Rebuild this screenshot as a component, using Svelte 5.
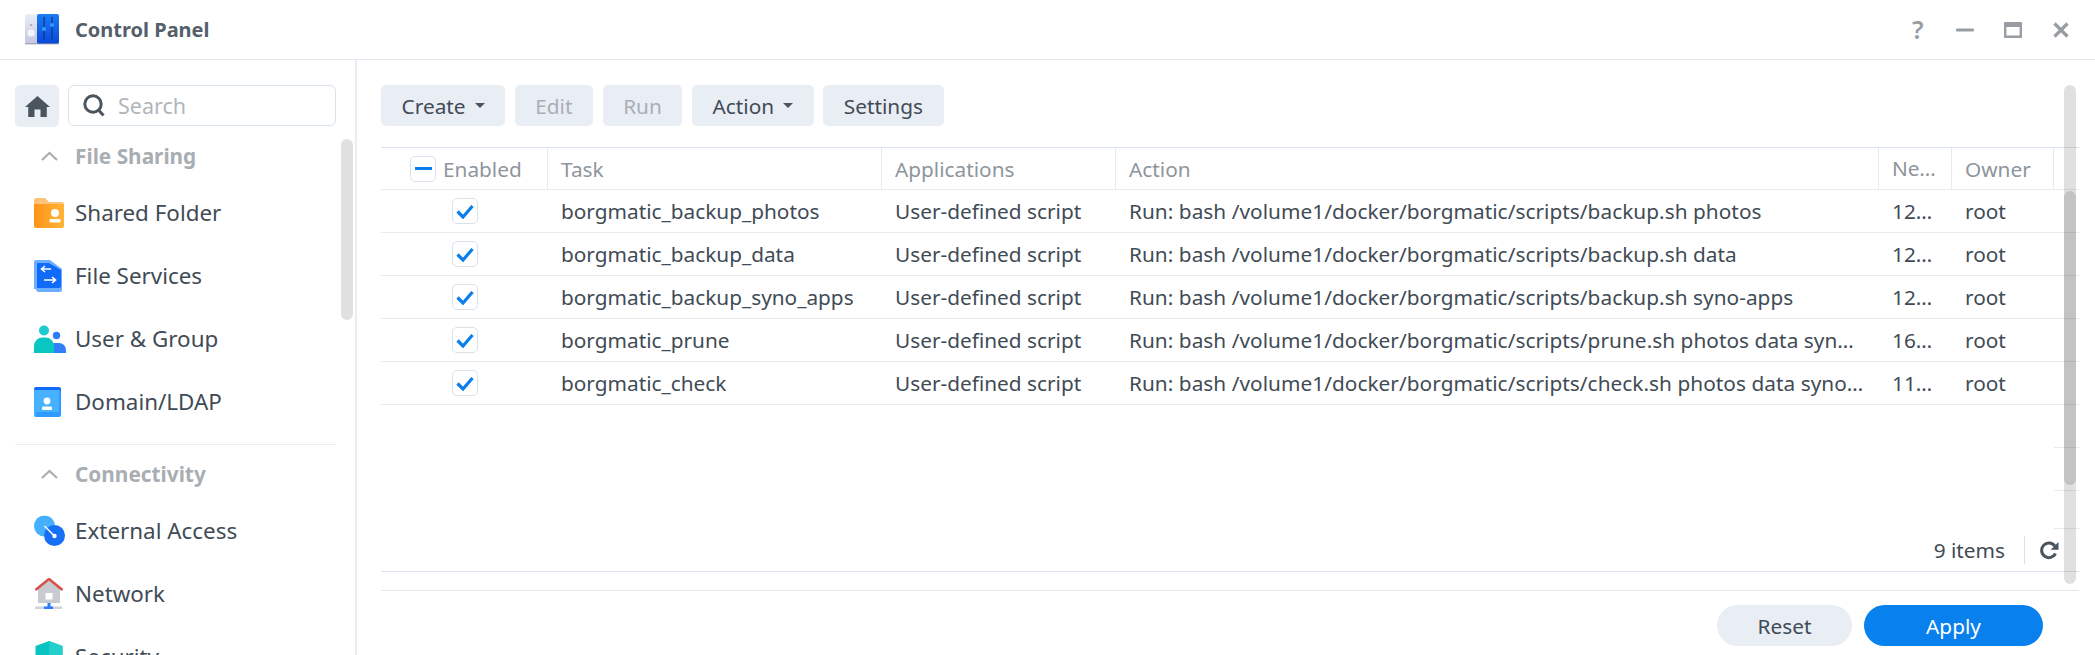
<script lang="ts">
	const tasks = [
		{ name: 'borgmatic_backup_photos', action: 'Run: bash /volume1/docker/borgmatic/scripts/backup.sh photos', next: '12:00' },
		{ name: 'borgmatic_backup_data', action: 'Run: bash /volume1/docker/borgmatic/scripts/backup.sh data', next: '12:30' },
		{ name: 'borgmatic_backup_syno_apps', action: 'Run: bash /volume1/docker/borgmatic/scripts/backup.sh syno-apps', next: '12:45' },
		{ name: 'borgmatic_prune', action: 'Run: bash /volume1/docker/borgmatic/scripts/prune.sh photos data syno-apps', next: '16:00' },
		{ name: 'borgmatic_check', action: 'Run: bash /volume1/docker/borgmatic/scripts/check.sh photos data syno-apps', next: '11:00' }
	];
</script>

<div class="window">
	<header class="titlebar">
		<svg class="app-logo" width="34" height="31" viewBox="0 0 34 31">
			<defs>
				<linearGradient id="cp-left" x1="0" y1="0" x2="0" y2="1">
					<stop offset="0" stop-color="#ecedf8" />
					<stop offset="1" stop-color="#c3c5e2" />
				</linearGradient>
				<linearGradient id="cp-right" x1="0" y1="0" x2="0" y2="1">
					<stop offset="0" stop-color="#1b7df0" />
					<stop offset="1" stop-color="#0a48d8" />
				</linearGradient>
			</defs>
			<rect x="0" y="0" width="15" height="30" rx="2" fill="url(#cp-left)" />
			<rect x="12" y="0" width="22" height="30" rx="2" fill="url(#cp-right)" />
			<rect x="0" y="29" width="34" height="1.5" fill="#8c90a8" opacity=".6" />
			<circle cx="6" cy="19" r="3.600" fill="#f4f4fb" />
			<circle cx="6" cy="11" r=".8" fill="#777" />
			<rect x="18.400" y="3" width="1.400" height="23" fill="#0c3aa6" />
			<rect x="26.200" y="3" width="1.400" height="23" fill="#0c3aa6" />
			<circle cx="19" cy="15" r="2.100" fill="#2f9bff" />
			<circle cx="27" cy="11" r="2.100" fill="#2f9bff" />
		</svg>
		<span class="app-title">Control Panel</span>
		<div class="win-btns">
			<span class="help">?</span>
			<svg width="18" height="18" viewBox="0 0 18 18"><rect x="0" y="7.500" width="18" height="3" rx="1.200" fill="#989da3" /></svg>
			<svg width="18" height="18" viewBox="0 0 18 18"><path fill-rule="evenodd" d="M1 1h16a1 1 0 0 1 1 1v14a1 1 0 0 1-1 1H1a1 1 0 0 1-1-1V2a1 1 0 0 1 1-1zm1.400 5v8.600h13.200V6z" fill="#989da3" /></svg>
			<svg width="18" height="18" viewBox="0 0 18 18"><path d="M2.500 2.500l13 13M15.500 2.500l-13 13" stroke="#989da3" stroke-width="3.200" fill="none" /></svg>
		</div>
	</header>

	<div class="body">
		<aside class="sidebar">
			<div class="search-row">
				<button class="home" aria-label="Home">
					<svg width="25" height="21" viewBox="0 0 25 21"><path fill-rule="evenodd" d="M12.500 0L25 11h-3.200v10H3.200V11H0zM9.500 13.500V21h6v-7.500z" fill="#4a5560" /></svg>
				</button>
				<div class="search">
					<svg width="23" height="23" viewBox="0 0 23 23"><circle cx="10" cy="10" r="8.200" fill="none" stroke="#4a5560" stroke-width="3" /><path d="M15.500 16l5 5.500" stroke="#4a5560" stroke-width="3" fill="none" /></svg>
					<span>Search</span>
				</div>
			</div>

			<div class="group-title">
				<svg width="17" height="10" viewBox="0 0 17 10"><path d="M1 9l7.500-7L16 9" fill="none" stroke="#a9aeb3" stroke-width="2.200" /></svg>
				File Sharing
			</div>
			<nav>
				<div class="item">
					<svg width="30" height="30" viewBox="0 0 30 30">
						<defs><linearGradient id="folder" x1="0" x2="1" y1="0" y2="0"><stop offset="0" stop-color="#ff9417" /><stop offset="1" stop-color="#ffb437" /></linearGradient></defs>
						<path d="M0 2a2 2 0 0 1 2-2h9l4 4h13a2 2 0 0 1 2 2v4H0z" fill="#ffc47c" />
						<path d="M0 6h30v22a2 2 0 0 1-2 2H2a2 2 0 0 1-2-2z" fill="url(#folder)" />
						<circle cx="21" cy="15" r="4" fill="#fff" />
						<rect x="15.500" y="21" width="11" height="3.500" rx="1" fill="#fff" />
					</svg>
					Shared Folder
				</div>
				<div class="item">
					<svg width="30" height="32" viewBox="0 0 30 32">
						<path d="M2 0h14l12 9v21a2 2 0 0 1-2 2H5a3 3 0 0 1-3-3z" fill="#6caeff" />
						<path d="M0 2a2 2 0 0 1 2-2h1v28a1 1 0 0 0 1 1H0z" fill="#6caeff" />
						<path d="M3 3h12l12 7v16a2 2 0 0 1-2 2H3z" fill="#0f6bf8" />
						<path d="M17 9H8M11 6L7.500 9l3.500 3M10 20h11M18 17l3.500 3-3.500 3" stroke="#fff" stroke-width="1.600" fill="none" />
					</svg>
					File Services
				</div>
				<div class="item">
					<svg width="32" height="28" viewBox="0 0 32 28">
						<circle cx="22.500" cy="10.500" r="3.700" fill="#2a7dfb" />
						<path d="M14 28v-3a7 7 0 0 1 7-7h4a7 7 0 0 1 7 7v3z" fill="#2f7ffb" />
						<circle cx="10" cy="5.500" r="5" fill="#1fcad0" />
						<path d="M0 28v-7a8.500 8.500 0 0 1 8.500-8.500h3A8.500 8.500 0 0 1 20 21v7z" fill="#09c6c2" />
					</svg>
					User &amp; Group
				</div>
				<div class="item">
					<svg width="30" height="30" viewBox="0 0 30 30">
						<path d="M2 0h23a2 2 0 0 1 2 2v8H0V2a2 2 0 0 1 2-2z" fill="#0f6bf8" />
						<path d="M0 3h25a2 2 0 0 1 2 2v23a2 2 0 0 1-2 2H2a2 2 0 0 1-2-2z" fill="#2f9bff" />
						<path d="M0 3h25v21a1 1 0 0 1-1 1H2v3H0z" fill="#46b2ff" />
						<circle cx="13" cy="14" r="3.400" fill="#fff" />
						<rect x="8" y="19.500" width="10" height="3.500" rx="1" fill="#fff" />
					</svg>
					Domain/LDAP
				</div>
			</nav>

			<hr />

			<div class="group-title second">
				<svg width="17" height="10" viewBox="0 0 17 10"><path d="M1 9l7.500-7L16 9" fill="none" stroke="#a9aeb3" stroke-width="2.200" /></svg>
				Connectivity
			</div>
			<nav>
				<div class="item">
					<svg width="32" height="31" viewBox="0 0 32 31">
						<circle cx="10.500" cy="10.500" r="10.500" fill="#44b0ff" />
						<circle cx="20.500" cy="20" r="10.500" fill="#1670f5" />
						<path d="M10.500 10.500l10 10" stroke="#fff" stroke-width="1.500" />
						<circle cx="20.500" cy="20.500" r="2.200" fill="#fff" />
					</svg>
					External Access
				</div>
				<div class="item">
					<svg width="30" height="32" viewBox="0 0 30 32">
						<path d="M4 10.500L15 2l11 8.500V25H4z" fill="#c8ccd1" />
						<path d="M1.500 12L15 1l13.500 11" fill="none" stroke="#d9524a" stroke-width="2.600" />
						<rect x="11.500" y="15" width="7" height="6.500" fill="#fff" />
						<rect x="1" y="28.500" width="27" height="2.500" fill="#d0d3d7" />
						<rect x="13.500" y="25" width="3" height="5" fill="#2a7dfb" />
						<rect x="10" y="28.500" width="9" height="2.500" fill="#2a7dfb" />
					</svg>
					Network
				</div>
				<div class="item">
					<svg width="30" height="32" viewBox="0 0 30 32"><path d="M15 0l13.500 5v12c0 7-6 12-13.500 15C7.500 29 1.500 24 1.500 17V5z" fill="#08c5c1" /><path d="M15 0l13.500 5v12H15z" fill="#22cfcc" /></svg>
					Security
				</div>
			</nav>
			<div class="scroll side-scroll"></div>
		</aside>

		<main>
			<div class="toolbar">
				<button>Create <i class="caret"></i></button>
				<button disabled>Edit</button>
				<button disabled>Run</button>
				<button>Action <i class="caret"></i></button>
				<button>Settings</button>
			</div>

			<div class="table">
				<div class="row head">
					<div class="cell enabled">
						<span class="check partial"><i></i></span>
						Enabled
					</div>
					<div class="cell">Task</div>
					<div class="cell">Applications</div>
					<div class="cell">Action</div>
					<div class="cell tight">Next run time</div>
					<div class="cell">Owner</div>
					<div class="cell"></div>
				</div>
				{#each tasks as t}
					<div class="row">
						<div class="cell center">
							<span class="check">
								<svg width="18" height="15" viewBox="0 0 18 15"><path d="M1.500 7.500l5.500 5.500L16.500 2" fill="none" stroke="#0a7fec" stroke-width="3.200" /></svg>
							</span>
						</div>
						<div class="cell">{t.name}</div>
						<div class="cell">User-defined script</div>
						<div class="cell command">{t.action}</div>
						<div class="cell next">{t.next}</div>
						<div class="cell">root</div>
						<div class="cell"></div>
					</div>
				{/each}
				<div class="tail"></div>
				<div class="tail"></div>
				<div class="tail shorter"></div>
				<div class="count">
					<span>9 items</span>
					<i class="sep"></i>
					<svg width="19" height="19" viewBox="0 0 19 19"><path d="M15.500 12.500A7.300 7.300 0 1 1 14.800 5" fill="none" stroke="#4a5560" stroke-width="3" /><path d="M18.500 1v7.800h-7.800z" fill="#4a5560" /></svg>
				</div>
			</div>

			<footer>
				<button class="pill">Reset</button>
				<button class="pill primary">Apply</button>
			</footer>

			<div class="scroll main-scroll"><div class="thumb"></div></div>
		</main>
	</div>
</div>

<style>
	:global(body) {
		margin: 0;
		background: #fff;
		font-family: 'Noto Sans', sans-serif;
		color: #414b55;
	}

	button {
		font-family: inherit;
		border: none;
		cursor: pointer;
	}

	.window {
		height: 655px;
		display: flex;
		flex-direction: column;
		overflow: hidden;
	}

	.titlebar {
		height: 59px;
		flex: none;
		display: flex;
		align-items: center;
		padding: 0 25px 0 25px;
		border-bottom: 1px solid #e3e8ee;
	}

	.app-logo {
		margin-right: 16px;
	}

	.app-title {
		font-size: 20px;
		font-weight: 700;
		color: #545f6b;
	}

	.win-btns {
		margin-left: auto;
		display: flex;
		align-items: center;
		gap: 30px;
	}

	.help {
		font-size: 25px;
		color: #989da3;
		font-weight: 600;
		width: 14px;
		line-height: 1;
	}

	.body {
		flex: 1;
		min-height: 0;
		display: flex;
	}

	.sidebar {
		width: 357px;
		flex: none;
		box-sizing: border-box;
		border-right: 2px solid #e7edf4;
		padding-top: 25px;
		position: relative;
	}

	.search-row {
		display: flex;
		gap: 9px;
		padding: 0 19px 0 15px;
		height: 42px;
		margin-bottom: 11px;
	}

	.home {
		width: 44px;
		height: 42px;
		background: #e9edf4;
		border-radius: 5px;
		display: flex;
		align-items: center;
		justify-content: center;
		padding: 0;
	}

	.search {
		flex: 1;
		box-sizing: border-box;
		height: 41px;
		border: 1.500px solid #d8e2ec;
		border-radius: 6px;
		display: flex;
		align-items: center;
		gap: 12px;
		padding-left: 14px;
		font-size: 21.500px;
		color: #b0b6bc;
	}

	.group-title {
		height: 38px;
		box-sizing: border-box;
		padding-bottom: 2px;
		margin-bottom: 5px;
		display: flex;
		align-items: center;
		font-size: 20.800px;
		font-weight: 700;
		color: #a9aeb3;
		padding-left: 41px;
		gap: 17px;
	}

	.group-title.second {
		margin-top: 11px;
	}

	.item {
		height: 63px;
		display: flex;
		align-items: center;
		font-size: 22.400px;
		color: #414b55;
		position: relative;
		padding-left: 75px;
	}

	.item svg {
		position: absolute;
		left: 34px;
		top: 50%;
		transform: translateY(-50%);
	}

	hr {
		border: none;
		border-top: 1.500px solid #e7edf4;
		margin: 11px 19px 0 15px;
	}

	main {
		flex: 1;
		min-width: 0;
		position: relative;
		display: flex;
		flex-direction: column;
		padding: 25px 16px 0 24px;
	}

	.toolbar {
		display: flex;
		gap: 9.500px;
		height: 41px;
		margin-bottom: 21px;
	}

	.toolbar button {
		height: 41px;
		background: #e9edf4;
		border-radius: 5px;
		padding: 0 20.600px;
		font-size: 20.800px;
		color: #414b55;
		display: flex;
		align-items: center;
		gap: 9px;
	}

	.toolbar button:disabled {
		color: #a9afb6;
		cursor: default;
	}

	.caret {
		width: 0;
		height: 0;
		border-left: 5px solid transparent;
		border-right: 5px solid transparent;
		border-top: 5px solid #4a5560;
	}

	.table {
		flex: 1;
		min-height: 0;
		display: flex;
		flex-direction: column;
		border-top: 1.500px solid #dbe4ee;
		border-bottom: 1.500px solid #dbe4ee;
	}

	.row {
		display: grid;
		grid-template-columns: 167px 334px 234px 763px 73px 102px 1fr;
		height: 43px;
		box-sizing: border-box;
		flex: none;
		border-bottom: 1.500px solid #e8ecf1;
		font-size: 20.800px;
		align-items: center;
	}

	.cell {
		padding: 0 13px;
		white-space: nowrap;
		overflow: hidden;
		text-overflow: ellipsis;
	}

	.cell.tight {
		padding-right: 14px;
	}

	.cell.next {
		padding-right: 16px;
	}

	.cell.command {
		letter-spacing: 0.04px;
	}

	.cell.center {
		display: flex;
		justify-content: center;
		padding: 0;
		overflow: visible;
	}

	.head {
		color: #8e959c;
		height: 42px;
	}

	.head .cell {
		height: 100%;
		box-sizing: border-box;
		display: flex;
		align-items: center;
		border-right: 1px solid #e4eaf1;
	}

	.head .tight {
		display: block;
		line-height: 41px;
	}

	.head .cell:last-child {
		border-right: none;
	}

	.head .enabled {
		padding: 0 0 0 29px;
		gap: 7px;
	}

	.check {
		width: 26px;
		height: 26px;
		box-sizing: border-box;
		border: 1.500px solid #d8e2ec;
		border-radius: 5px;
		display: flex;
		align-items: center;
		justify-content: center;
		flex: none;
		background: #fff;
	}

	.check.partial i {
		width: 17px;
		height: 3px;
		background: #0a7fec;
		display: block;
	}

	.tail {
		flex: none;
		height: 43px;
		box-sizing: border-box;
		margin-left: auto;
		width: 25px;
		border-bottom: 1px solid #e8ecf1;
	}

	.tail.shorter {
		height: 38px;
	}

	.count {
		flex: 1;
		display: flex;
		align-items: center;
		justify-content: flex-end;
		font-size: 20.800px;
		padding-right: 20px;
	}

	.sep {
		width: 1px;
		height: 28px;
		background: #d8e2ec;
		margin: 0 15px 0 19px;
	}

	footer {
		height: 65px;
		margin-top: 18px;
		box-sizing: border-box;
		flex: none;
		border-top: 1.500px solid #e3e8ee;
		display: flex;
		justify-content: flex-end;
		align-items: flex-start;
		gap: 12px;
		padding: 14px 36px 0 0;
	}

	.pill {
		height: 41px;
		border-radius: 21px;
		width: 135px;
		background: #e9edf4;
		color: #414b55;
		font-size: 20.800px;
		padding: 0;
	}

	.pill.primary {
		width: 179px;
		background: #0880ee;
		color: #fff;
	}

	.scroll {
		position: absolute;
		width: 12px;
		border-radius: 6px;
		background: rgba(0, 0, 0, 0.12);
	}

	.side-scroll {
		left: 341px;
		top: 79px;
		height: 181px;
	}

	.main-scroll {
		right: 19px;
		top: 25px;
		height: 499px;
	}

	.thumb {
		position: absolute;
		left: 0;
		right: 0;
		top: 106px;
		height: 294px;
		border-radius: 6px;
		background: rgba(0, 0, 0, 0.13);
	}
</style>
